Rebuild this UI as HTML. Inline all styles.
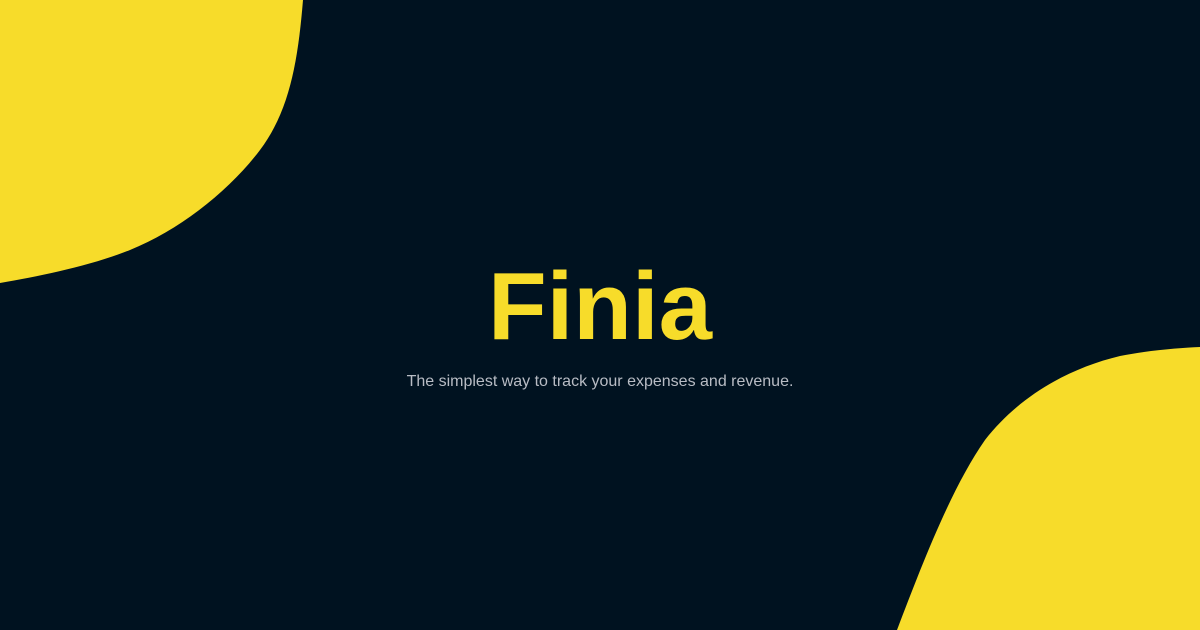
<!DOCTYPE html>
<html><head><meta charset="utf-8"><style>
html,body{margin:0;padding:0;width:1200px;height:630px;overflow:hidden;background:#001220;}
svg{position:absolute;left:0;top:0}
.t{position:absolute;left:0;width:1200px;text-align:center;font-family:"Liberation Sans",sans-serif;}
.h{top:252px;font-size:96px;font-weight:bold;color:#f7dc2a;letter-spacing:0px;line-height:110px}
.s{top:372px;font-size:16px;color:#b8bcc4;line-height:20px}
</style></head><body>
<svg width="1200" height="630" viewBox="0 0 1200 630">
<path d="M0 0 L303 0 C298 60 290 110 260 150 C230 190 180 230 130 250 C90 266 40 276 0 283 Z" fill="#f7dc2a"/>
<path d="M1200 347 L1200 630 L897 630 C920 570 950 490 985 440 C1020 395 1070 368 1120 356 C1150 350 1180 348 1200 347 Z" fill="#f7dc2a"/>
</svg>
<div class="t h">Finia</div>
<div class="t s">The simplest way to track your expenses and revenue.</div>
</body></html>
